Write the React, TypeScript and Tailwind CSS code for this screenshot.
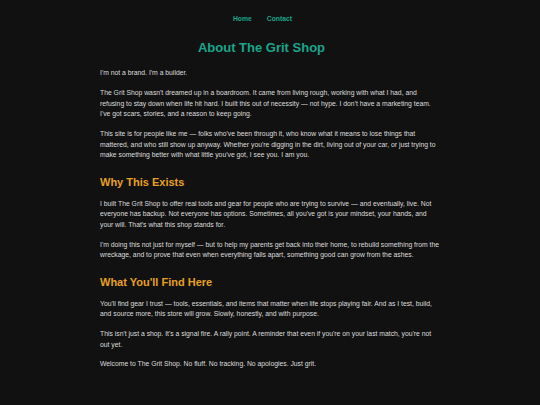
export default function App() {
  return (
    <div className="min-h-[405px] bg-[#111111] font-['Liberation_Sans',Arial,sans-serif] text-[#dddddd]">
      <nav className="flex justify-center pt-[14px] text-[6.8px] font-bold text-[#1aa58b]">
        <a href="#" className="mr-[15px]">Home</a>
        <a href="#" className="mr-[15px]">Contact</a>
      </nav>

      <main className="mx-auto w-[340px] pt-[15px]">
        <h1 className="mb-[11px] pr-[17px] text-center text-[13px] font-bold leading-[18px] text-[#1aa58b]">
          About The Grit Shop
        </h1>

        <p className="mb-[9px] text-[6.8px] leading-[10.7px]">I'm not a brand. I'm a builder.</p>
        <p className="mb-[9px] text-[6.8px] leading-[10.7px]">
          The Grit Shop wasn't dreamed up in a boardroom. It came from living rough, working with what I had, and
          refusing to stay down when life hit hard. I built this out of necessity — not hype. I don't have a marketing team.
          I've got scars, stories, and a reason to keep going.
        </p>
        <p className="mb-[9px] text-[6.8px] leading-[10.7px]">
          This site is for people like me — folks who've been through it, who know what it means to lose things that
          mattered, and who still show up anyway. Whether you're digging in the dirt, living out of your car, or just trying to
          make something better with what little you've got, I see you. I am you.
        </p>

        <h2 className="mb-[9.5px] mt-[14px] text-[11px] font-bold leading-[14px] text-[#e8a020]">Why This Exists</h2>
        <p className="mb-[9px] text-[6.8px] leading-[10.7px]">
          I built The Grit Shop to offer real tools and gear for people who are trying to survive — and eventually, live. Not
          everyone has backup. Not everyone has options. Sometimes, all you've got is your mindset, your hands, and
          your will. That's what this shop stands for.
        </p>
        <p className="mb-[9px] text-[6.8px] leading-[10.7px]">
          I'm doing this not just for myself — but to help my parents get back into their home, to rebuild something from the
          wreckage, and to prove that even when everything falls apart, something good can grow from the ashes.
        </p>

        <h2 className="mb-[9.5px] mt-[14px] text-[11px] font-bold leading-[14px] text-[#e8a020]">What You'll Find Here</h2>
        <p className="mb-[9px] text-[6.8px] leading-[10.7px]">
          You'll find gear I trust — tools, essentials, and items that matter when life stops playing fair. And as I test, build,
          and source more, this store will grow. Slowly, honestly, and with purpose.
        </p>
        <p className="mb-[9px] text-[6.8px] leading-[10.7px]">
          This isn't just a shop. It's a signal fire. A rally point. A reminder that even if you're on your last match, you're not
          out yet.
        </p>
        <p className="mb-[9px] text-[6.8px] leading-[10.7px]">
          Welcome to The Grit Shop. No fluff. No tracking. No apologies. Just grit.
        </p>
      </main>
    </div>
  );
}
